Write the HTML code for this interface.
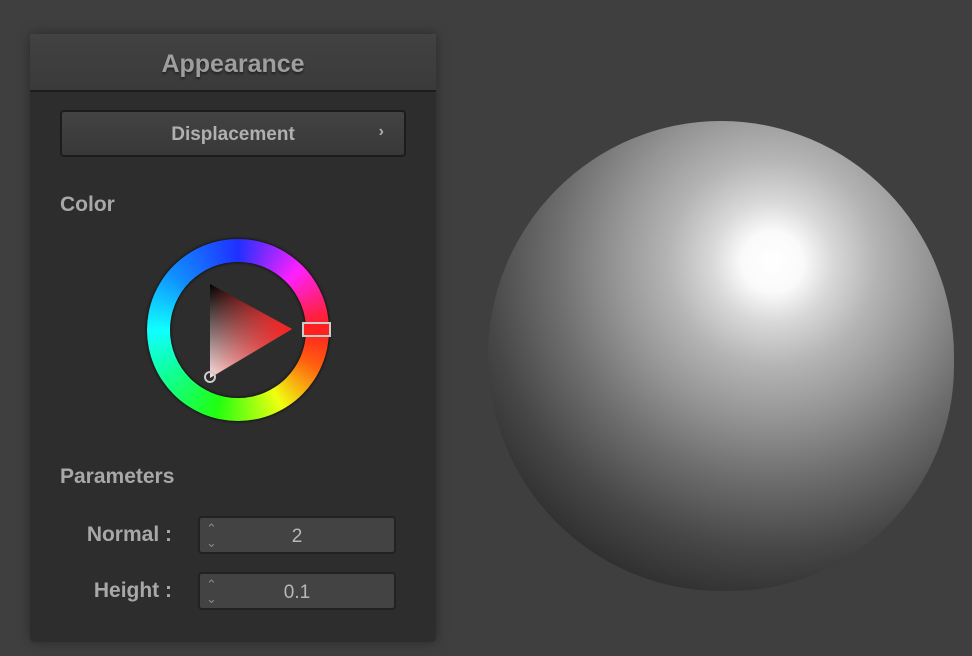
<!DOCTYPE html>
<html><head><style>
body{margin:0;width:972px;height:656px;background:#3f3f3f;overflow:hidden;font-family:"Liberation Sans",sans-serif;position:relative}
.panel{position:absolute;left:30px;top:34px;width:406px;height:608px;background:#2d2d2d;box-shadow:0 0 12px rgba(0,0,0,.35);border-radius:0 0 4px 4px}
.hdr{height:56px;background:linear-gradient(#424242,#3a3a3a);border-bottom:2px solid #1d1d1d;color:#9e9e9e;font-weight:bold;font-size:25px;text-align:center;line-height:60px;text-shadow:0 2px 2px #222}
.btn{position:absolute;left:30px;top:76px;width:346px;height:47px;box-sizing:border-box;border:2px solid #1c1c1c;border-radius:4px;background:linear-gradient(#434343,#383838);color:#b0b0b0;font-weight:bold;font-size:19px;text-align:center;line-height:46px}
.btn span{position:absolute;right:20px;top:-3px;font-size:16px}
.lbl{position:absolute;left:30px;color:#a8a8a8;font-weight:bold;font-size:21px}
.row{position:absolute;left:0;width:406px}
.row .k{position:absolute;right:264px;color:#a8a8a8;font-weight:bold;font-size:21px}
.row .f{position:absolute;left:168px;width:198px;height:38px;box-sizing:border-box;border:2px solid #222;border-radius:4px;background:#434343;color:#b8b8b8;font-size:19px;text-align:center;line-height:38px}
.row .f i{position:absolute;left:6px;top:4px;font-style:normal;font-size:13px;line-height:14px;color:#888}
</style></head><body>
<div class="panel">
<div class="hdr">Appearance</div>
<div class="btn">Displacement<span>›</span></div>
<div class="lbl" style="top:159px">Color</div>
<div style="position:absolute;left:117px;top:205px;width:182px;height:182px;border-radius:50%;background:conic-gradient(from 0deg,#2030ff,#ff20ff 45deg,#ff2040 80deg,#ff2020 90deg,#ff6010 115deg,#f0ff10 150deg,#20ff10 195deg,#10ffa0 240deg,#10ffff 270deg,#1090ff 310deg,#2030ff 360deg);box-shadow:0 0 3px #000"></div>
<div style="position:absolute;left:140px;top:228px;width:136px;height:136px;border-radius:50%;background:#2d2d2d;box-shadow:0 0 3px #000 inset"></div>
<svg style="position:absolute;left:0;top:0" width="406" height="608">
<defs><linearGradient id="g1" x1="0" y1="0" x2="1" y2="0"><stop offset="0" stop-color="#ff2020" stop-opacity="0"/><stop offset="1" stop-color="#ff2020"/></linearGradient>
<linearGradient id="g2" x1="0" y1="0" x2="0" y2="1"><stop offset="0" stop-color="#000"/><stop offset="1" stop-color="#ffe0e0"/></linearGradient></defs>
<polygon points="180,250 262,295 180,344" fill="url(#g2)"/>
<polygon points="180,250 262,295 180,344" fill="url(#g1)"/>
<circle cx="180" cy="343" r="5" fill="none" stroke="#ccc" stroke-width="2"/>
<rect x="273" y="289" width="27" height="13" fill="#ff2020" stroke="#ccc" stroke-width="2"/>
</svg>
<div class="lbl" style="top:431px">Parameters</div>
<div class="row" style="top:482px"><span class="k" style="line-height:38px">Normal :</span><div class="f"><i>⌃<br>⌄</i>2</div></div>
<div class="row" style="top:538px"><span class="k" style="line-height:38px">Height :</span><div class="f"><i>⌃<br>⌄</i>0.1</div></div>
</div>
<div style="position:absolute;left:488px;top:121px;width:466px;height:470px;border-radius:50% 50% 48% 50%;background:radial-gradient(circle at 61% 30%,#ffffff 0,#fafafa 7%,#d8d8d8 14%,#b4b4b4 24%,#959595 36%,#6e6e6e 50%,#474747 66%,#2a2a2a 82%,#1c1c1c 100%)"></div>
</body></html>
